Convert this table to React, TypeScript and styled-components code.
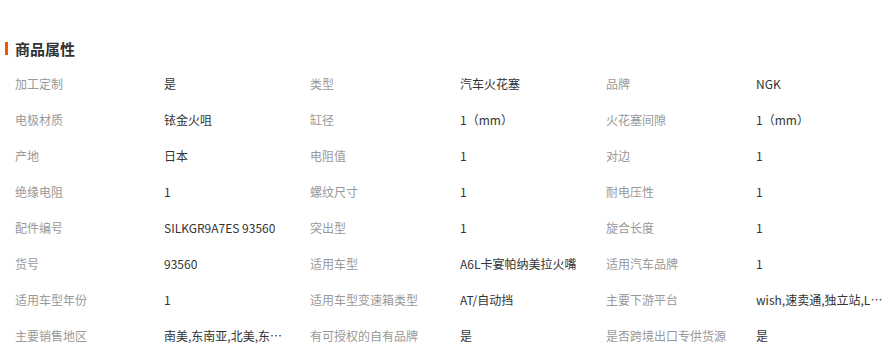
import { Fragment } from 'react';
import styled, { createGlobalStyle } from 'styled-components';

const GlobalStyle = createGlobalStyle`
  html, body {
    margin: 0;
    padding: 0;
    background: #fff;
    font-family: "Microsoft YaHei", "Noto Sans CJK SC", "Liberation Sans", sans-serif;
  }
`

const Section = styled.div`
  width: 888px;
  padding-top: 40px;
`

const Title = styled.h3`
  display: flex;
  align-items: center;
  margin: 0;
  height: 18px;
  padding-left: 15px;
  position: relative;
  font-size: 15px;
  font-weight: 700;
  color: #333;
  line-height: 18px;

  &::before{
    content: '';
    position: absolute;
    left: 5px;
    top: 2px;
    width: 3px;
    height: 13px;
    background: #ff5000;
  }
`

const Grid = styled.div`
  display: grid;
  grid-template-columns: 149px 146px 150px 146px 150px 1fr;
  grid-auto-rows: 36px;
  padding-left: 15px;
  margin-top: 7px;
  font-size: 12px;
`

const Cell = styled.div<{ $label?: boolean; $max?: number }>`
  display: flex;
  align-items: center;
  min-width: 0;
  color: ${props => props.$label ? '#999' : '#333'};

  span{
    display: block;
    max-width: ${props => props.$max ?? 140}px;
    white-space: nowrap;
    overflow: hidden;
    text-overflow: ellipsis;
  }
`

const attrs: [string, string][] = [
  ['加工定制', '是'],
  ['类型', '汽车火花塞'],
  ['品牌', 'NGK'],
  ['电极材质', '铱金火咀'],
  ['缸径', '1（mm）'],
  ['火花塞间隙', '1（mm）'],
  ['产地', '日本'],
  ['电阻值', '1'],
  ['对边', '1'],
  ['绝缘电阻', '1'],
  ['螺纹尺寸', '1'],
  ['耐电压性', '1'],
  ['配件编号', 'SILKGR9A7ES 93560'],
  ['突出型', '1'],
  ['旋合长度', '1'],
  ['货号', '93560'],
  ['适用车型', 'A6L卡宴帕纳美拉火嘴'],
  ['适用汽车品牌', '1'],
  ['适用车型年份', '1'],
  ['适用车型变速箱类型', 'AT/自动挡'],
  ['主要下游平台', 'wish,速卖通,独立站,LAZADA,ebay,亚马逊'],
  ['主要销售地区', '南美,东南亚,北美,东欧,非洲,欧洲'],
  ['有可授权的自有品牌', '是'],
  ['是否跨境出口专供货源', '是'],
]

export default function App(){
  return(
    <>
      <GlobalStyle />
      <Section>
        <Title>商品属性</Title>
        <Grid>
          {attrs.map(([k, v], i) => (
            <Fragment key={k}>
              <Cell $label>{<span>{k}</span>}</Cell>
              <Cell $max={i % 3 === 2 ? 128 : 122}><span>{v}</span></Cell>
            </Fragment>
          ))}
        </Grid>
      </Section>
    </>
  )
}
